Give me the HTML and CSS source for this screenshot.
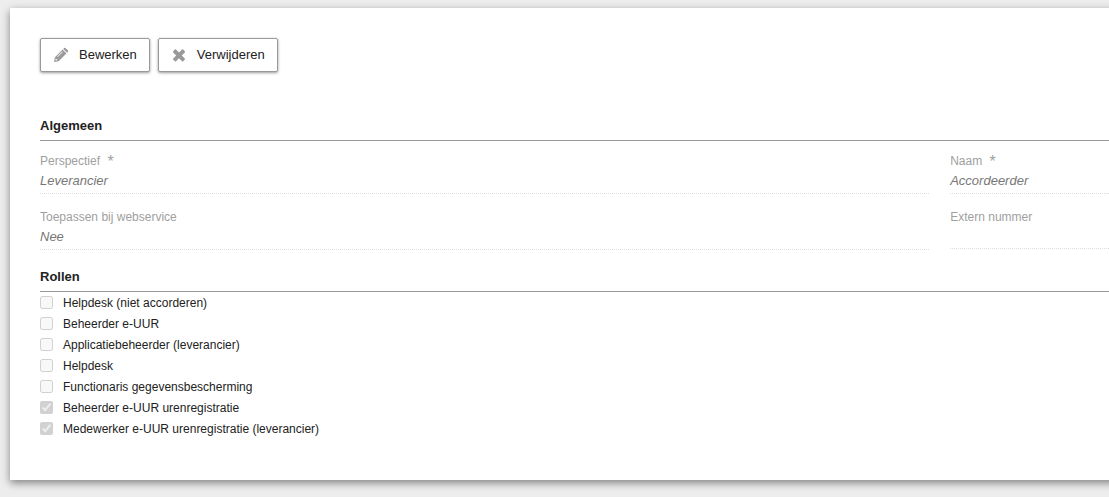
FILE: index.html
```html
<!DOCTYPE html>
<html lang="nl">
<head>
  <meta charset="UTF-8" />
  <meta name="viewport" content="width=device-width, initial-scale=1.0" />
  <title>Accordeerder</title>
  <link rel="stylesheet" href="styles.css">
</head>
<body>
  <main class="panel">
    <div class="toolbar">
      <button type="button" class="btn">
        <svg class="icon" viewBox="0 0 16 16" aria-hidden="true">
          <path fill-rule="evenodd" d="M1 15l.8-4.600 7.800-7.800 3.800 3.800L5.600 14.200zM2.700 11.600l-.3 2 2-.3v-1.100H3.300zM4.300 9.500l.5.5 5-5-.5-.5zM10.300 1.900l.8-.8q.8-.7 1.600.1l2.100 2.100q.8.800.1 1.600l-.8.8z"/>
        </svg>
        <span>Bewerken</span>
      </button>
      <button type="button" class="btn">
        <svg class="icon" viewBox="0 0 16 16" aria-hidden="true">
          <path d="M5 2.600L8 5.600l3-3q.6-.5 1.200 0l1.600 1.600q.5.600 0 1.200l-3 3 3 3q.5.600 0 1.200l-1.600 1.600q-.6.500-1.200 0l-3-3-3 3q-.6.500-1.200 0l-1.600-1.600q-.5-.6 0-1.200l3-3-3-3q-.5-.6 0-1.200l1.600-1.600q.6-.5 1.200 0z"/>
        </svg>
        <span>Verwijderen</span>
      </button>
    </div>

    <section>
      <h2>Algemeen</h2>
      <dl class="fields">
        <div class="field">
          <dt>Perspectief <span class="required">*</span></dt>
          <dd>Leverancier</dd>
        </div>
        <div class="field">
          <dt>Naam <span class="required">*</span></dt>
          <dd>Accordeerder</dd>
        </div>
        <div class="field">
          <dt>Toepassen bij webservice</dt>
          <dd>Nee</dd>
        </div>
        <div class="field">
          <dt>Extern nummer</dt>
          <dd></dd>
        </div>
      </dl>
    </section>

    <section>
      <h2>Rollen</h2>
      <ul class="roles">
        <li><label><input type="checkbox" disabled> Helpdesk (niet accorderen)</label></li>
        <li><label><input type="checkbox" disabled> Beheerder e-UUR</label></li>
        <li><label><input type="checkbox" disabled> Applicatiebeheerder (leverancier)</label></li>
        <li><label><input type="checkbox" disabled> Helpdesk</label></li>
        <li><label><input type="checkbox" disabled> Functionaris gegevensbescherming</label></li>
        <li><label><input type="checkbox" checked disabled> Beheerder e-UUR urenregistratie</label></li>
        <li><label><input type="checkbox" checked disabled> Medewerker e-UUR urenregistratie (leverancier)</label></li>
      </ul>
    </section>
  </main>
</body>
</html>
```
FILE: styles.css
```css
* { box-sizing: border-box; }
body { margin: 0; padding: 8px 0 17px 10px; overflow-x: hidden; background: #ededed; color: #222; font-family: "Liberation Sans", Arial, sans-serif; font-size: 12px; }
.panel { margin-right: -20px; padding: 30px 20px 41px 30px; background: #fff; box-shadow: 0 3px 8px rgba(0, 0, 0, 0.45); }
.toolbar { display: flex; gap: 8px; margin-bottom: 43px; }
.btn { display: flex; align-items: center; gap: 10px; height: 34px; padding: 0 12px; background: #fff; color: #222; border: 1px solid #999; border-radius: 2px; box-shadow: 0 1px 3px rgba(0, 0, 0, 0.4); font-family: inherit; font-size: 13px; }
.btn span { padding-bottom: 2px; }
.icon { width: 16px; height: 16px; fill: #999; }
h2 { margin: 0; padding-bottom: 3px; border-bottom: 1px solid #999; font-size: 13px; line-height: 22px; }
.fields { display: grid; grid-template-columns: 28fr 5fr; column-gap: 21px; row-gap: 13px; margin: 10px 0 16px; align-items: start; }
.field { border-bottom: 1px dotted #ddd; }
dt { color: #a0a0a0; line-height: 20px; }
.required { margin-left: 4px; font-size: 16px; line-height: 16px; vertical-align: -2px; }
dd { margin: 0; min-height: 21px; padding-bottom: 2px; color: #777; font-size: 13px; font-style: italic; line-height: 20px; }
.roles { list-style: none; margin: 0; padding: 0; }
.roles label { display: flex; align-items: center; gap: 10px; height: 21px; }
.roles input { width: 13px; height: 13px; margin: 0; }
```
